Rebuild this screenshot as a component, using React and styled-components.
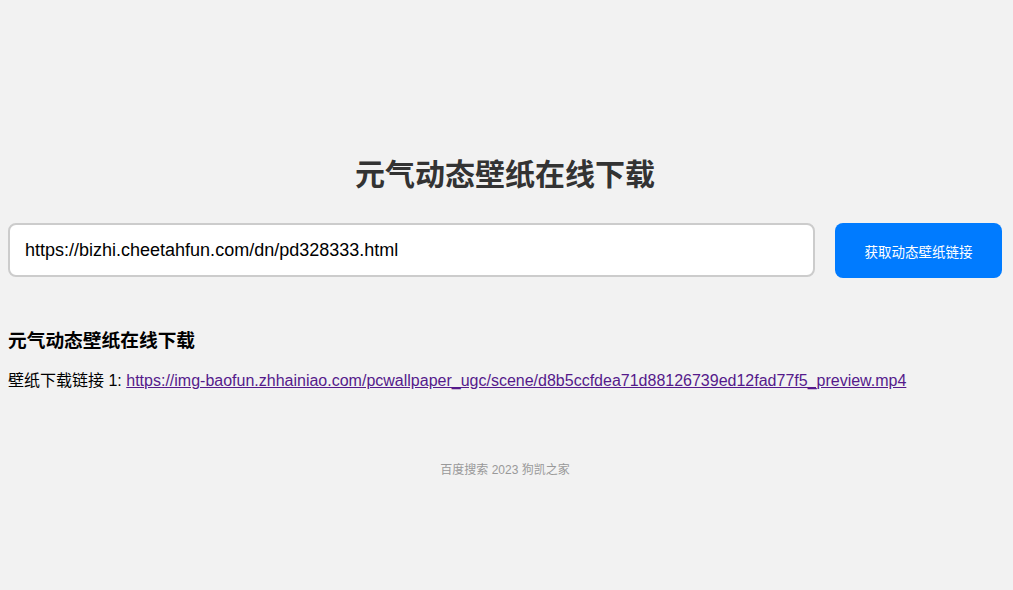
import React, { useState } from 'react';
import styled, { createGlobalStyle } from 'styled-components';

const GlobalStyle = createGlobalStyle`
  body {
    margin: 0;
    background: #f2f2f2;
    font-family: "Liberation Sans", Arial, "Noto Sans CJK SC", sans-serif;
  }
`;

const Page = styled.div`
  width: 994px;
  padding: 157px 0 0 8px;
`;

const Title = styled.h1`
  margin: 0 0 30px;
  font-size: 30px;
  line-height: 36px;
  font-weight: bold;
  color: #333;
  text-align: center;
`;

const SearchRow = styled.form`
  display: flex;
  gap: 20px;
  align-items: stretch;
`;

const UrlInput = styled.input`
  flex: 1;
  height: 54px;
  box-sizing: border-box;
  padding: 0 15px;
  border: 2px solid #ccc;
  border-radius: 8px;
  background: #fff;
  font-family: inherit;
  font-size: 18px;
  color: #000;
  outline: none;
`;

const FetchBtn = styled.button`
  width: 167px;
  height: 55px;
  padding-top: 1px;
  border: 0;
  border-radius: 8px;
  background-color: #007bff;
  color: white;
  font-family: inherit;
  font-size: 13.5px;
  cursor: pointer;
`;

const Results = styled.div`
  margin-top: 52px;
`;

const ResultHeading = styled.h3`
  margin: 0 0 19px;
  font-size: 18.72px;
  line-height: 22px;
  font-weight: bold;
  color: #000;
`;

const ResultLine = styled.p`
  margin: 0;
  font-size: 16px;
  line-height: 20px;
  color: #000;
`;

const ResultLink = styled.a`
  color: #551a8b;
  text-decoration: underline;
`;

const Footer = styled.footer`
  margin-top: 71px;
  font-size: 12px;
  line-height: 16px;
  color: #999;
  text-align: center;
`;

const links = [
  'https://img-baofun.zhhainiao.com/pcwallpaper_ugc/scene/d8b5ccfdea71d88126739ed12fad77f5_preview.mp4',
];

export default function App() {
  const [url, setUrl] = useState('https://bizhi.cheetahfun.com/dn/pd328333.html');

  return (
    <>
      <GlobalStyle />
      <Page>
        <Title>元气动态壁纸在线下载</Title>
        <SearchRow onSubmit={e => e.preventDefault()}>
          <UrlInput value={url} onChange={e => setUrl(e.target.value)} />
          <FetchBtn type="submit">获取动态壁纸链接</FetchBtn>
        </SearchRow>
        <Results>
          <ResultHeading>元气动态壁纸在线下载</ResultHeading>
          {links.map((l, i) => (
            <ResultLine key={l}>
              壁纸下载链接 {i + 1}: <ResultLink href={l}>{l}</ResultLink>
            </ResultLine>
          ))}
        </Results>
        <Footer>百度搜索 2023 狗凯之家</Footer>
      </Page>
    </>
  );
}
